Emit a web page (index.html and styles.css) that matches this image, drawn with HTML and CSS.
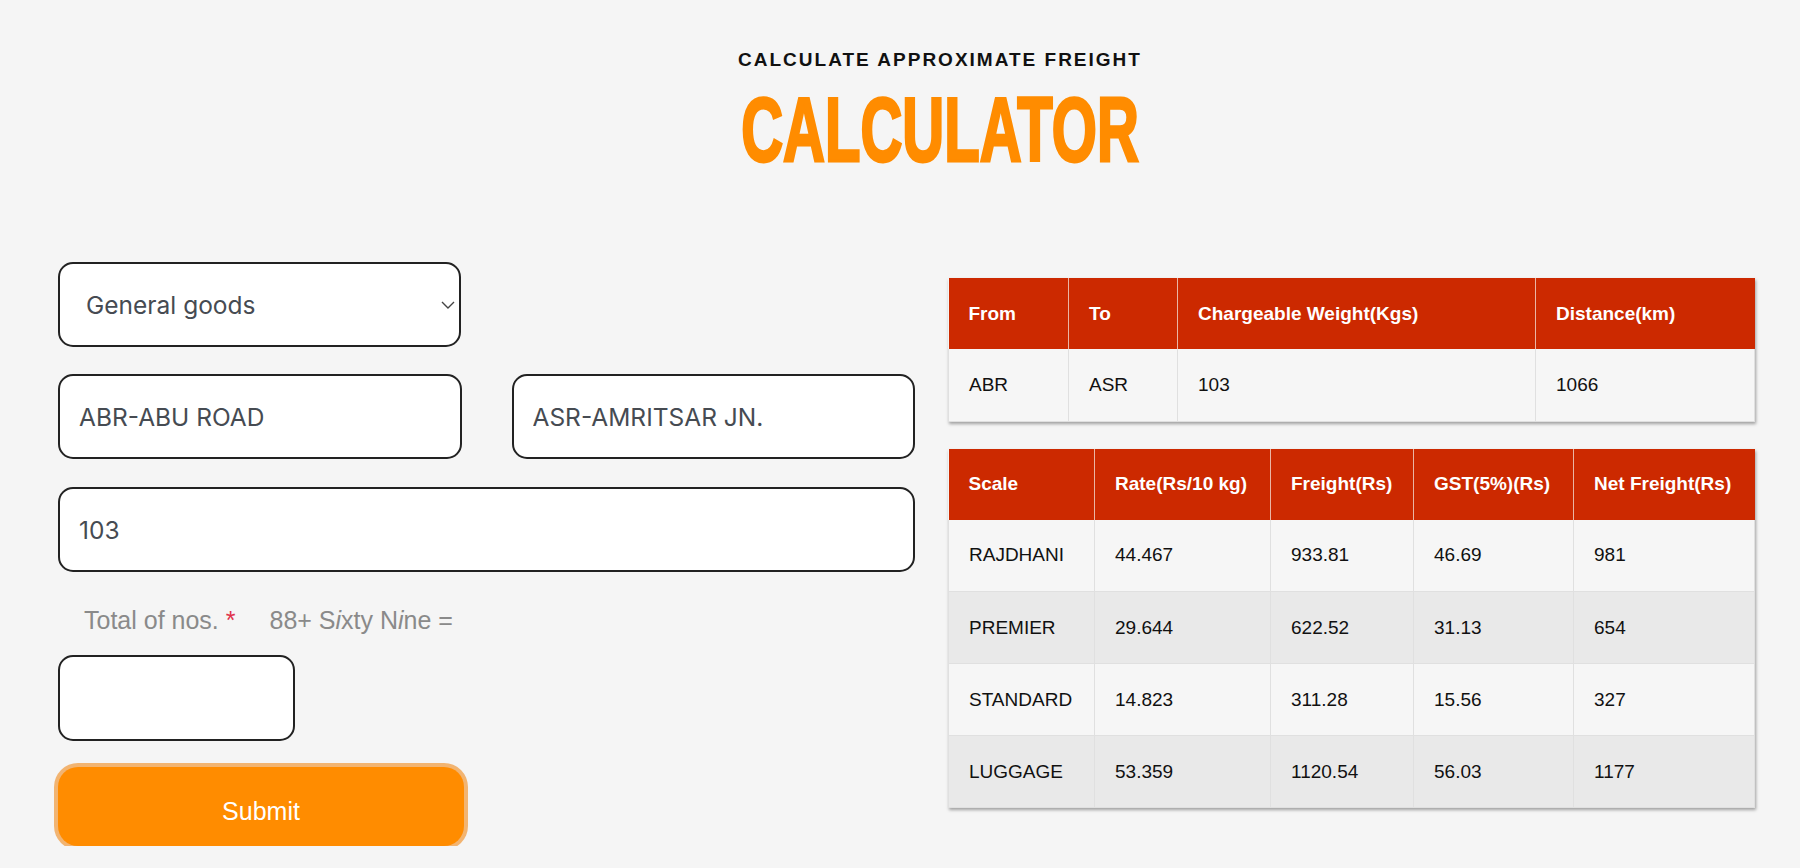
FILE: index.html
```html
<!DOCTYPE html>
<html>
<head>
  <meta charset="UTF-8">
  <title>Freight Calculator</title>
  <link rel="stylesheet" href="styles.css">
</head>
<body>
  <!-- Heading -->
  <header class="heading">
    <p class="eyebrow">CALCULATE APPROXIMATE FREIGHT</p>
    <h1 class="title">CALCULATOR</h1>
  </header>

  <main class="calc">
    <!-- Form -->
    <form class="calc-form">
      <div class="select-wrap">
        <select class="field field-select">
          <option>General goods</option>
          <option>Perishable goods</option>
        </select>
        <svg class="chevron" width="14" height="8" viewBox="0 0 14 8">
          <path d="M1 1l6 6 6-6" fill="none" stroke="#444" stroke-width="1.4"/>
        </svg>
      </div>

      <div class="field-row">
        <input class="field" type="text" value="ABR-ABU ROAD">
        <input class="field" type="text" value="ASR-AMRITSAR JN.">
      </div>

      <input class="field field-wide" type="text" value="103">

      <div class="captcha-label">
        <span>Total of nos. <span class="req">*</span></span>
        <span class="captcha-q">88+ S<i>i</i>xty N<i>i</i>ne =</span>
      </div>

      <input class="field field-small" type="text">

      <button class="submit" type="button">Submit</button>
    </form>

    <!-- Results -->
    <section class="results">
      <table class="route">
        <colgroup>
          <col class="c-from"><col class="c-to"><col class="c-weight"><col class="c-dist">
        </colgroup>
        <tr>
          <th>From</th><th>To</th><th>Chargeable Weight(Kgs)</th><th>Distance(km)</th>
        </tr>
        <tr>
          <td>ABR</td><td>ASR</td><td>103</td><td>1066</td>
        </tr>
      </table>

      <table class="rates">
        <colgroup>
          <col class="c-scale"><col class="c-rate"><col class="c-freight"><col class="c-gst"><col class="c-net">
        </colgroup>
        <tr>
          <th>Scale</th><th>Rate(Rs/10 kg)</th><th>Freight(Rs)</th><th>GST(5%)(Rs)</th><th>Net Freight(Rs)</th>
        </tr>
        <tr>
          <td>RAJDHANI</td><td>44.467</td><td>933.81</td><td>46.69</td><td>981</td>
        </tr>
        <tr>
          <td>PREMIER</td><td>29.644</td><td>622.52</td><td>31.13</td><td>654</td>
        </tr>
        <tr>
          <td>STANDARD</td><td>14.823</td><td>311.28</td><td>15.56</td><td>327</td>
        </tr>
        <tr>
          <td>LUGGAGE</td><td>53.359</td><td>1120.54</td><td>56.03</td><td>1177</td>
        </tr>
      </table>
    </section>
  </main>
</body>
</html>
```

FILE: styles.css
```css
* {
  box-sizing: border-box;
}

html, body {
  margin: 0;
  padding: 0;
  background: #f5f5f5;
  font-family: "Liberation Sans", Arial, sans-serif;
}

/* Heading */
.heading {
  padding: 49px 0 0 80px;
  text-align: center;
}

.eyebrow {
  margin: 0;
  font-size: 19px;
  line-height: 22px;
  font-weight: 700;
  letter-spacing: 2px;
  color: #111;
}

.title {
  margin: 15px 0 0;
  font-size: 90px;
  line-height: 89px;
  font-weight: 700;
  color: #ff8c00;
  -webkit-text-stroke: 3px #ff8c00;
  transform: scaleX(0.645);
}

/* Layout */
.calc {
  display: flex;
  gap: 33px;
  margin-top: 87px;
  padding: 0 46px 0 58px;
}

.calc-form {
  width: 857px;
  display: flex;
  flex-direction: column;
  align-items: flex-start;
}

/* Fields */
.field {
  height: 85px;
  border: 2px solid #222;
  border-radius: 15px;
  background: #fff;
  font-family: Inter, "Noto Sans", sans-serif;
  font-size: 24.5px;
  color: #464b52;
  padding: 0 19px;
  outline: none;
}

.select-wrap {
  position: relative;
  width: 403px;
}

.field-select {
  width: 100%;
  padding-left: 26px;
  appearance: none;
  -webkit-appearance: none;
}

.chevron {
  position: absolute;
  right: 6px;
  top: 39px;
  pointer-events: none;
}

.field-row {
  display: flex;
  gap: 50px;
  width: 100%;
  margin-top: 27px;
}

.field-row .field {
  flex: 1 1 0;
  min-width: 0;
}

.field-wide {
  width: 100%;
  margin-top: 28px;
}

.captcha-label {
  display: flex;
  gap: 34px;
  margin-top: 33px;
  padding-left: 26px;
  font-size: 25px;
  line-height: 30px;
  color: #8a8a8a;
}

.req {
  color: #e0314b;
}

.field-small {
  width: 237px;
  height: 86px;
  margin-top: 20px;
}

.submit {
  width: 406px;
  height: 79px;
  margin-top: 26px;
  border: none;
  border-radius: 20px;
  background: #ff8c00;
  box-shadow: 0 0 0 4px #f2b471;
  color: #fff;
  font-family: "Liberation Sans", Arial, sans-serif;
  font-size: 25px;
  padding-top: 10px;
}

/* Tables */
.results {
  width: 806px;
  padding-top: 16px;
}

table {
  width: 100%;
  border-collapse: collapse;
  table-layout: fixed;
  box-shadow: 1px 2px 3px rgba(0, 0, 0, 0.35);
  font-size: 19px;
}

.route {
  margin-bottom: 27px;
}

th {
  height: 71px;
  padding: 0 20px;
  background: #cc2900;
  color: #fff;
  font-weight: 700;
  text-align: left;
  white-space: nowrap;
  border-right: 1px solid #eab5a5;
}

th:last-child {
  border-right: none;
}

td {
  height: 72px;
  padding: 0 20px;
  color: #111;
  border: 1px solid #e0e0e0;
  background: #f6f6f6;
  white-space: nowrap;
}

tr:first-child + tr td {
  border-top: none;
}

.rates tr:nth-child(odd) td {
  background: #e9e9e9;
}

.c-from { width: 120px; }
.c-to { width: 109px; }
.c-weight { width: 358px; }
.c-dist { width: 219px; }

.c-scale { width: 146px; }
.c-rate { width: 176px; }
.c-freight { width: 143px; }
.c-gst { width: 160px; }
.c-net { width: 181px; }
```
